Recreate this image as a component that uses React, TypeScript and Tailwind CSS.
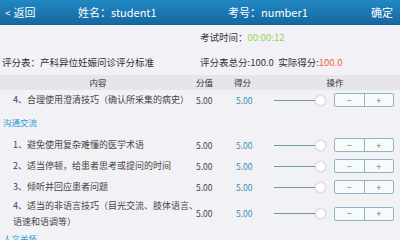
import React from "react";

type Item = { text: string[]; score: string; got: string };

const font = { fontFamily: '"Noto Sans CJK SC", "Noto Sans", sans-serif' };

function Stepper() {
  return (
    <div className="flex items-center">
      <div className="relative w-[46px] h-[1px] bg-[#6f98a8]">
        <div className="absolute right-[-6px] top-[-5px] w-[11px] h-[11px] rounded-full bg-white border border-[#d8dde0] shadow-[0_0_2px_rgba(0,0,0,0.15)]" />
      </div>
      <div className="ml-[14px] flex h-[14px] w-[60px] rounded-[2px] border border-[#8fb6c4] bg-[#f7fafb] text-[9px] leading-none text-[#777]">
        <div className="flex-1 flex items-center justify-center border-r border-[#8fb6c4]">−</div>
        <div className="flex-1 flex items-center justify-center">+</div>
      </div>
    </div>
  );
}

function Row({ item, tall }: { item: Item; tall?: boolean }) {
  return (
    <div className={`flex items-center ${tall ? "h-[32px]" : "h-[21px]"}`}>
      <div className="w-[196px] pl-[13px] pr-1 text-[9px] leading-[16px] text-[#444]">
        {item.text.map((t, i) => (
          <div key={i} className="whitespace-nowrap">{t}</div>
        ))}
      </div>
      <div className="w-[28px] text-[8.5px] text-[#444]">{item.score}</div>
      <div className="w-[50px] pl-[12px] text-[8.5px] text-[#3a8fc0]">{item.got}</div>
      <Stepper />
    </div>
  );
}

function Section({ title, h }: { title: string; h: string }) {
  return (
    <div className={`flex items-center pl-[3px] text-[8.5px] text-[#2e9ccf] ${h}`}>{title}</div>
  );
}

export default function App() {
  const talk: Item[] = [
    { text: ["1、避免使用复杂难懂的医学术语"], score: "5.00", got: "5.00" },
    { text: ["2、适当停顿，给患者思考或提问的时间"], score: "5.00", got: "5.00" },
    { text: ["3、倾听并回应患者问题"], score: "5.00", got: "5.00" },
  ];
  return (
    <div className="w-[400px] h-[240px] overflow-hidden bg-[#f2f2f6]" style={font}>
      <div className="h-[25px] flex items-center px-[5px] text-white text-[11px] bg-gradient-to-b from-[#2188c4] to-[#16679e]">
        <div className="w-[73px] flex items-center gap-[3px]">
          <span className="text-[10px]">&lt;</span>
          <span>返回</span>
        </div>
        <div className="w-[150px]">姓名：student1</div>
        <div className="flex-1">考号：number1</div>
        <div className="pr-[2px]">确定</div>
      </div>
      <div className="h-[25px] flex items-center pl-[200px] text-[9.5px] text-[#333]">
        考试时间：<span className="text-[#8fd44a]">00:00:12</span>
      </div>
      <div className="h-[24.5px] flex items-center text-[9.5px] text-[#333]">
        <div className="w-[200px] pl-[2px]">评分表：产科异位妊娠问诊评分标准</div>
        <div>
          评分表总分:100.0&nbsp;&nbsp;实际得分:<span className="text-[#f25b4e]">100.0</span>
        </div>
      </div>
      <div className="h-[15px] flex items-center bg-[#e5e5ea] text-[8.5px] text-[#333]">
        <div className="w-[196px] text-center">内容</div>
        <div className="w-[28px]">分值</div>
        <div className="w-[50px] pl-[10px]">得分</div>
        <div className="flex-1 text-center pr-[4px]">操作</div>
      </div>
      <Row item={{ text: ["4、合理使用澄清技巧（确认所采集的病史）"], score: "5.00", got: "5.00" }} />
      <Section title="沟通交流" h="h-[24px]" />
      {talk.map((it, i) => (
        <Row key={i} item={it} />
      ))}
      <Row
        tall
        item={{ text: ["4、适当的非语言技巧（目光交流、肢体语言、", "语速和语调等）"], score: "5.00", got: "5.00" }}
      />
      <Section title="人文关怀" h="h-[17px]" />
    </div>
  );
}
